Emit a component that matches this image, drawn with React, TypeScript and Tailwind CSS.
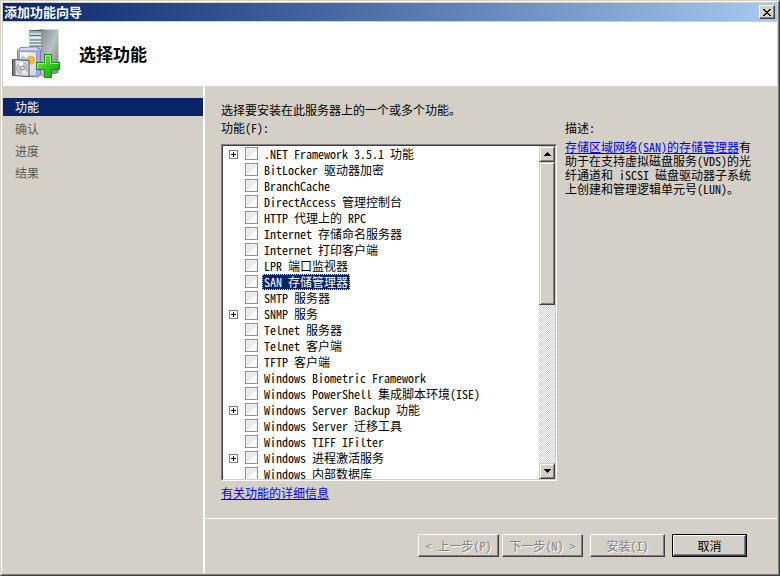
import type { ReactNode } from "react";

type Feature = {
  name: string;
  expandable?: boolean;
  selected?: boolean;
};

const steps = ["功能", "确认", "进度", "结果"];

const features: Feature[] = [
  { name: ".NET Framework 3.5.1 功能", expandable: true },
  { name: "BitLocker 驱动器加密" },
  { name: "BranchCache" },
  { name: "DirectAccess 管理控制台" },
  { name: "HTTP 代理上的 RPC" },
  { name: "Internet 存储命名服务器" },
  { name: "Internet 打印客户端" },
  { name: "LPR 端口监视器" },
  { name: "SAN 存储管理器", selected: true },
  { name: "SMTP 服务器" },
  { name: "SNMP 服务", expandable: true },
  { name: "Telnet 服务器" },
  { name: "Telnet 客户端" },
  { name: "TFTP 客户端" },
  { name: "Windows Biometric Framework" },
  { name: "Windows PowerShell 集成脚本环境(ISE)" },
  { name: "Windows Server Backup 功能", expandable: true },
  { name: "Windows Server 迁移工具" },
  { name: "Windows TIFF IFilter" },
  { name: "Windows 进程激活服务", expandable: true },
  { name: "Windows 内部数据库" },
];

const raised =
  "border border-t-white border-l-white border-r-[#404040] border-b-[#404040] bg-[#d4d0c8] shadow-[inset_-1px_-1px_0_#808080]";

function ServerIcon() {
  return (
    <svg width="50" height="50" viewBox="0 0 50 50" aria-hidden="true">
      <defs>
        <linearGradient id="side" x1="0" x2="1" y1="0" y2="1">
          <stop offset="0" stopColor="#7d888b" />
          <stop offset="0.5" stopColor="#b9c2c3" />
          <stop offset="1" stopColor="#6c7678" />
        </linearGradient>
        <linearGradient id="front" x1="0" x2="0" y1="0" y2="1">
          <stop offset="0" stopColor="#8a979f" />
          <stop offset="0.2" stopColor="#cfdbe2" />
          <stop offset="1" stopColor="#97a5ad" />
        </linearGradient>
        <linearGradient id="box" x1="0" x2="1" y1="0" y2="1">
          <stop offset="0" stopColor="#ffffff" />
          <stop offset="1" stopColor="#cfcfee" />
        </linearGradient>
        <linearGradient id="plus" x1="0" x2="1" y1="0" y2="1">
          <stop offset="0" stopColor="#8bea5c" />
          <stop offset="0.5" stopColor="#35cc1c" />
          <stop offset="1" stopColor="#0fa008" />
        </linearGradient>
      </defs>
      <path d="M29 2l4-1.500h14.500V44L30 48z" fill="url(#side)" />
      <path d="M18 1.500l15-1-3 2v44l-12-4z" fill="url(#front)" />
      <path d="M18 1.500l15-1-3 1.500H18z" fill="#4f5d66" />
      <path d="M19 6.500h11M19 11h11M19 14h11M19 17h11" stroke="#5b6b75" />
      <path d="M19 5h11M19 8.500h11M19 12.500h11M19 15.500h11" stroke="#f0f6f9" />
      <path d="M6.500 21l3-2.500 17-.5 3 3v25l-3 2-20-2z" fill="#a9a8dc" stroke="#7d7cba" />
      <path d="M8 21l2-2 15-.5 2 2.500z" fill="#dcdcf7" />
      <path d="M8.500 22.500l17 .5v24l-17-1.500z" fill="url(#box)" stroke="#9c9bd0" />
      <circle cx="20" cy="31" r="4.500" fill="#f2b548" />
      <path d="M10 26l7 4-2 8h-5z" fill="#9bd3cf" />
      <path d="M1.500 30.500l16.500 1v16l-16.500-1z" fill="#e3e1e0" stroke="#4e4c4c" />
      <path d="M2 31h2.500v15.500H2z" fill="#777575" />
      <circle cx="11.500" cy="39" r="6" fill="#c3c3c8" stroke="#98989c" strokeWidth="0.500" />
      <path d="M11.500 39L7 34.500a6.500 6.500 0 0 1 5-1.500z" fill="#fff" />
      <path d="M11.500 39l4.500 4.500a6.500 6.500 0 0 1-5 1.500z" fill="#f4f4e8" />
      <circle cx="11.500" cy="39" r="1.800" fill="#fff" stroke="#77777f" />
      <path
        d="M33.500 25.500h7v8h8v7h-8v8h-7v-8h-8v-7h8z"
        fill="url(#plus)"
        stroke="#108a10"
      />
      <path d="M34.500 34.500v-8h5v8h8M26.500 39.500v-5h8" fill="none" stroke="#b5f59a" />
    </svg>
  );
}

function ScrollButton({ label, children }: { label: string; children: ReactNode }) {
  return (
    <button
      aria-label={label}
      className="flex h-4 w-4 shrink-0 items-center justify-center border border-t-[#d4d0c8] border-l-[#d4d0c8] border-r-[#404040] border-b-[#404040] bg-[#d4d0c8] shadow-[inset_1px_1px_0_#fff,inset_-1px_-1px_0_#808080]"
    >
      {children}
    </button>
  );
}

function ScrollBar() {
  return (
    <div className="flex w-4 shrink-0 flex-col bg-[repeating-conic-gradient(#fff_0_25%,#d4d0c8_0_50%)] bg-[length:2px_2px]">
      <ScrollButton label="向上滚动">
        <svg width="7" height="4" viewBox="0 0 7 4" shapeRendering="crispEdges">
          <path d="M3 0h1v1h1v1h1v1h1v1H0V3h1V2h1V1h1z" />
        </svg>
      </ScrollButton>
      <div className="h-[143px] border border-t-[#d4d0c8] border-l-[#d4d0c8] border-r-[#404040] border-b-[#404040] bg-[#d4d0c8] shadow-[inset_1px_1px_0_#fff,inset_-1px_-1px_0_#808080]" />
      <div className="flex-1" />
      <ScrollButton label="向下滚动">
        <svg width="7" height="4" viewBox="0 0 7 4" shapeRendering="crispEdges">
          <path d="M0 0h7v1H6v1H5v1H4v1H3V3H2V2H1V1H0z" />
        </svg>
      </ScrollButton>
    </div>
  );
}

function FeatureRow({ feature }: { feature: Feature }) {
  return (
    <li className="flex h-4 shrink-0 items-center pl-1.5">
      <span className="flex w-4 shrink-0">
        {feature.expandable && (
          <button aria-label="展开" className="h-[9px] w-[9px]">
            <svg width="9" height="9" viewBox="0 0 9 9" shapeRendering="crispEdges">
              <path d="M0 0h9v9H0z" fill="#808080" />
              <path d="M1 1h7v7H1z" fill="#fff" />
              <path d="M2 4h5v1H2zM4 2h1v5H4z" />
            </svg>
          </button>
        )}
      </span>
      <label className="flex items-start gap-1">
        <input
          type="checkbox"
          className="mt-px h-[13px] w-[13px] shrink-0 appearance-none border border-[#8e8f8f] bg-[linear-gradient(135deg,#ebebeb_50%,#fbfbfb_60%)] shadow-[inset_0_0_0_1px_#f4f4f4]"
        />
        <span
          className={
            feature.selected
              ? "h-4 bg-[#0a246a] px-0.5 leading-4 text-white outline-1 -outline-offset-1 outline-dotted outline-[#f5db95]"
              : "h-4 px-0.5 leading-4"
          }
        >
          {feature.name}
        </span>
      </label>
    </li>
  );
}

function WizardButton({ children, wide }: { children: ReactNode; wide?: boolean }) {
  return (
    <button
      disabled
      className={`${raised} h-[23px] text-[#808080] [text-shadow:1px_1px_0_#fff] ${wide ? "w-[81px]" : "w-[75px]"}`}
    >
      {children}
    </button>
  );
}

export default function App() {
  return (
    <div className="flex min-h-screen flex-col border border-t-[#d4d0c8] border-l-[#d4d0c8] border-r-[#404040] border-b-[#404040] bg-[#d4d0c8] font-['Noto_Sans_Mono_CJK_SC','Noto_Sans_CJK_SC',monospace] text-xs text-black">
      <div className="flex flex-1 flex-col border border-t-white border-l-white border-r-[#808080] border-b-[#808080] p-px">
        <header className="flex h-[18px] shrink-0 items-center justify-between bg-linear-to-r from-[#0a246a] to-[#a6caf0] pr-0.5 pl-px">
          <h1 className="text-[13px] leading-[18px] font-bold text-white">添加功能向导</h1>
          <button
            aria-label="关闭"
            className={`${raised} flex h-3.5 w-4 items-center justify-center`}
          >
            <svg width="8" height="7" viewBox="0 0 8 7" shapeRendering="crispEdges">
              <path d="M0 0h2v1h1v1h2V1h1V0h2v1H7v1H6v1H5v1h1v1h1v1h1v1H6V6H5V5H3v1H2v1H0V6h1V5h1V4h1V3H2V2H1V1H0z" />
            </svg>
          </button>
        </header>

        <div className="mt-px flex h-16 shrink-0 items-center gap-[18px] bg-white pl-2">
          <ServerIcon />
          <h2 className="text-[17px] font-bold">选择功能</h2>
        </div>

        <div className="flex flex-1">
          <nav className="w-[200px] shrink-0 pt-3">
            <ol>
              {steps.map((step, i) => (
                <li
                  key={step}
                  aria-current={i === 0 ? "step" : undefined}
                  className={
                    i === 0
                      ? "mb-0.5 h-[18px] bg-[#0a246a] pl-3 leading-[18px] text-white"
                      : "h-[22px] pl-3 leading-[22px] text-[#5c5a50]"
                  }
                >
                  {step}
                </li>
              ))}
            </ol>
          </nav>

          <div className="flex min-w-0 flex-1 flex-col border-l-2 border-white">
            <main className="flex flex-1 pt-[15px] pl-4">
              <section className="flex w-[336px] flex-col">
                <p className="leading-[18px]">选择要安装在此服务器上的一个或多个功能。</p>
                <p id="features-label" className="leading-[18px]">
                  功能(F):
                </p>
                <div className="mt-[7px] flex h-[337px] border border-t-[#808080] border-l-[#808080] border-r-white border-b-white">
                  <div className="flex min-w-0 flex-1 border border-t-[#404040] border-l-[#404040] border-r-[#d4d0c8] border-b-[#d4d0c8] bg-white">
                    <ul
                      aria-labelledby="features-label"
                      className="flex min-w-0 flex-1 flex-col overflow-hidden whitespace-nowrap"
                    >
                      {features.map((feature) => (
                        <FeatureRow key={feature.name} feature={feature} />
                      ))}
                    </ul>
                    <ScrollBar />
                  </div>
                </div>
                <p className="mt-[3px] leading-[18px]">
                  <a href="#features" className="text-[#0000ff] underline">
                    有关功能的详细信息
                  </a>
                </p>
              </section>

              <aside className="min-w-0 flex-1 pt-[18px] pr-5 pl-2">
                <h3 className="leading-[18px]">描述:</h3>
                <p className="mt-[3px] leading-[14px]">
                  <a href="#san" className="text-[#0000ff] underline">
                    存储区域网络(SAN)的存储管理器
                  </a>
                  有助于在支持虚拟磁盘服务(VDS)的光纤通道和 iSCSI 磁盘驱动器子系统上创建和管理逻辑单元号(LUN)。
                </p>
              </aside>
            </main>

            <footer className="flex h-[55px] shrink-0 items-start justify-end border-t border-white pt-[15px] pr-[30px]">
              <WizardButton wide>&lt; 上一步(P)</WizardButton>
              <span className="w-[3px]" />
              <WizardButton wide>下一步(N) &gt;</WizardButton>
              <span className="w-[7px]" />
              <WizardButton>安装(I)</WizardButton>
              <span className="w-[7px]" />
              <div className="flex h-[23px] w-[75px] border border-black">
                <button className={`${raised} flex-1`}>取消</button>
              </div>
            </footer>
          </div>
        </div>
      </div>
    </div>
  );
}
